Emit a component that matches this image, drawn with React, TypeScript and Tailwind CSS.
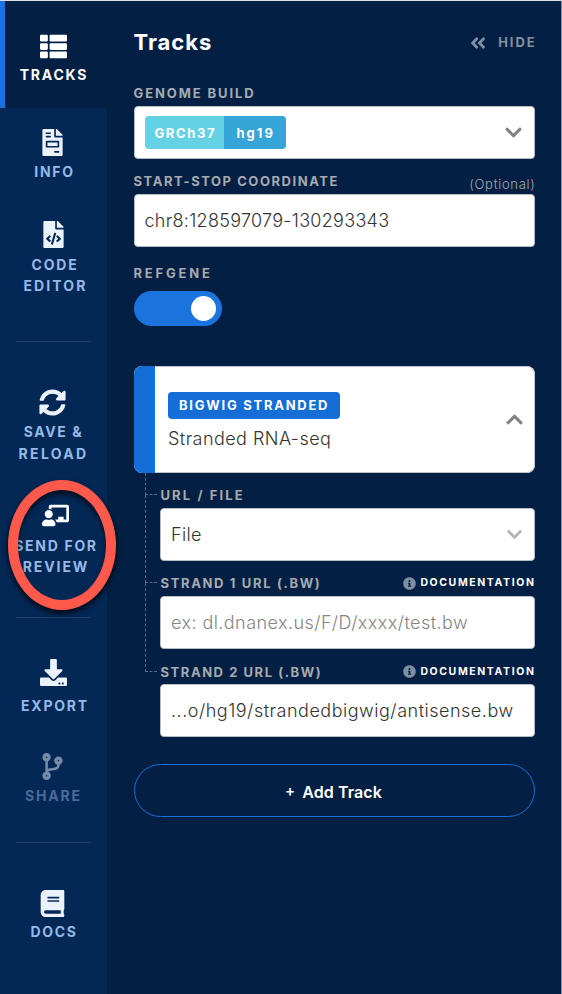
import type { ReactNode } from "react";
import {
  FaThList, FaFileInvoice, FaFileCode, FaSyncAlt, FaChalkboardTeacher, FaDownload,
  FaCodeBranch, FaBook, FaAngleDoubleLeft, FaChevronDown, FaChevronUp, FaInfoCircle,
} from "react-icons/fa";

function NavItem({ icon, children, className = "" }: { icon: ReactNode; children: ReactNode; className?: string }) {
  return (
    <button className={`flex w-full flex-col items-center text-[14px] font-bold leading-[21.5px] ${className}`}>
      <span className="flex h-[27px] items-center text-[27px]">{icon}</span>
      <span className="flex flex-col items-center whitespace-nowrap">{children}</span>
    </button>
  );
}

function Divider({ className }: { className: string }) {
  return <div className={`mx-4 h-px w-[75px] shrink-0 bg-[#1b3f67] ${className}`} />;
}

function Label({ children, className = "" }: { children: ReactNode; className?: string }) {
  return <span className={`whitespace-nowrap text-[13px] font-bold leading-4 text-[#a5abb0] ${className}`}>{children}</span>;
}

function DocLink() {
  return (
    <a className="flex h-4 items-center gap-[4px] text-[10.5px] font-bold text-white">
      <FaInfoCircle className="size-[13px] text-[#8090a3]" />
      <span className="-mr-px tracking-[1.6px]">DOCUMENTATION</span>
    </a>
  );
}

function Field({ children }: { children: ReactNode }) {
  return (
    <div className="flex h-[53px] items-center justify-between rounded-[4px] border border-[#b7bcc1] bg-white px-[10px] text-[18px] font-light text-[#333]">
      {children}
    </div>
  );
}

export default function App() {
  return (
    <div className="relative flex h-[994px] w-[562px] overflow-hidden border-r border-t border-r-[#8291a2] border-t-[#dce2e7] bg-[#032044] font-['Inter','Noto_Sans',sans-serif]">
      <nav className="flex w-[107px] shrink-0 flex-col bg-[#032856] text-[#96b9e8]">
        <div className="h-[107px] shrink-0 border-l-[5px] border-[#1a73dd] bg-[#032044] pt-[32px] text-white">
          <NavItem icon={<FaThList />} className="-ml-[3px] gap-[4px]"><span className="ml-[2px] tracking-[1.8px]">TRACKS</span></NavItem>
        </div>
        <NavItem icon={<FaFileInvoice className="-ml-[2px] text-[#ebf2fb]" />} className="mt-[21px] gap-[4.5px]"><span className="ml-[2px] tracking-[1.7px]">INFO</span></NavItem>
        <NavItem icon={<FaFileCode className="text-[#ebf2fb]" />} className="mt-[39px] gap-[5.5px]">
          <span className="ml-[3px] tracking-[1.8px]">CODE</span>
          <span className="ml-[4px] tracking-[2.1px]">EDITOR</span>
        </NavItem>
        <Divider className="mt-[44px]" />
        <NavItem icon={<FaSyncAlt className="-ml-[2px] text-[#ebf2fb]" />} className="mt-[47px] gap-[5.5px]">
          <span className="tracking-[1.6px]">SAVE &amp;</span>
          <span className="tracking-[2.3px]">RELOAD</span>
        </NavItem>
        <NavItem icon={<FaChalkboardTeacher className="ml-[3px] text-white" />} className="mt-[38px] gap-[5.5px]">
          <span className="ml-[5px] tracking-[1.7px]">SEND FOR</span>
          <span className="ml-[5px] tracking-[1.9px]">REVIEW</span>
        </NavItem>
        <Divider className="mt-[39px]" />
        <NavItem icon={<FaDownload className="text-[#ebf2fb]" />} className="mt-[41px] gap-[9px]"><span className="ml-[3px] tracking-[1.8px]">EXPORT</span></NavItem>
        <NavItem icon={<FaCodeBranch className="-ml-[2px] text-[#788ba7]" />} className="mt-[37px] gap-[4.5px] text-[#496b99]"><span className="tracking-[1.8px]">SHARE</span></NavItem>
        <Divider className="mt-[36px]" />
        <NavItem icon={<FaBook className="-ml-[2px] text-[#ebf2fb]" />} className="mt-[46.5px] gap-[4.5px]"><span className="ml-px tracking-[1.7px]">DOCS</span></NavItem>
      </nav>

      <main className="flex w-[427.5px] flex-col pl-[26.5px] text-white">
        <header className="flex h-[83px] items-center justify-between">
          <h1 className="text-[22px] font-bold tracking-[1px]">Tracks</h1>
          <button className="flex items-center gap-[11px] text-[13px] font-bold text-[#8191a4]">
            <FaAngleDoubleLeft className="size-[18px]" /><span className="-mr-[2px] tracking-[1.9px]">HIDE</span>
          </button>
        </header>
        <div className="flex h-[22px] pt-px"><Label className="tracking-[1.9px]">GENOME BUILD</Label></div>
        <Field>
          <div className="flex h-[33px] overflow-hidden rounded-[4px] text-[13px] font-bold leading-[35px] text-white">
            <span className="w-[79px] bg-[#65d1e5] pl-[10px] tracking-[1.6px]">GRCh37</span>
            <span className="w-[62.5px] bg-[#35a5d7] pl-[13px] tracking-[2px]">hg19</span>
          </div>
          <FaChevronDown className="mr-px size-[19px] text-[#808284]" />
        </Field>
        <div className="flex h-[35px] items-start justify-between pt-[14px]">
          <Label className="tracking-[1.55px]">START-STOP COORDINATE</Label>
          <span className="-mr-px mt-[3px] text-[13px] font-light leading-4 tracking-[0.7px] text-[#a5abb0]">(Optional)</span>
        </div>
        <Field><span className="tracking-[0.29px]">chr8:128597079-130293343</span></Field>
        <div className="flex h-[44px] pt-[18px]"><Label className="tracking-[2.8px]">REFGENE</Label></div>
        <button className="flex h-[35px] w-[88px] items-center justify-end rounded-full bg-[#1b74dd] pr-[6px]">
          <span className="size-[25px] rounded-full bg-white" />
        </button>

        <section className="mt-[40px] flex h-[107px] w-full shrink-0 overflow-hidden rounded-[8px] bg-white">
          <div className="w-[21px] bg-[#156dd7]" />
          <div className="flex grow items-center justify-between rounded-r-[8px] border-y border-r border-[#c0c4c8] pl-[13.5px] pr-[9.5px]">
            <div className="flex flex-col items-start pt-[5px]">
              <span className="flex h-[27px] w-[171.5px] items-center rounded-[4px] bg-[#156dd7] pl-[11px] text-[13px] font-bold">
                <span className="whitespace-nowrap tracking-[1.75px]">BIGWIG STRANDED</span>
              </span>
              <span className="mt-[6px] text-[18px] font-light leading-[27px] tracking-[0.45px] text-[#333]">Stranded RNA-seq</span>
            </div>
            <FaChevronUp className="size-[19px] text-[#808284]" />
          </div>
        </section>

        <div className="flex">
          <div className="ml-[11.5px] flex w-[15px] shrink-0 flex-col">
            <div className="h-[22px] w-[12px] border-b border-l border-dashed border-[#506b8c]" />
            <div className="h-[88px] w-[12px] border-b border-l border-dashed border-[#506b8c]" />
            <div className="h-[89px] w-[12px] border-b border-l border-dashed border-[#506b8c]" />
          </div>
          <div className="flex w-[374.5px] shrink-0 flex-col">
            <div className="flex h-[35px] pt-[14px]"><Label className="ml-[0.5px] tracking-[2.1px]">URL / FILE</Label></div>
            <Field><span className="tracking-[0.3px]">File</span><FaChevronDown className="mr-px size-[17px] text-[#b1b3b5]" /></Field>
            <div className="flex h-[35px] justify-between pt-[14px]"><Label className="ml-[0.5px] tracking-[1.65px]">STRAND 1 URL (.BW)</Label><DocLink /></div>
            <Field><span className="tracking-[0.43px] text-[#858585]">ex: dl.dnanex.us/F/D/xxxx/test.bw</span></Field>
            <div className="flex h-[35px] justify-between pt-[14.5px]"><Label className="ml-[0.5px] tracking-[1.55px]">STRAND 2 URL (.BW)</Label><DocLink /></div>
            <Field><span className="whitespace-nowrap tracking-[0.51px]">...o/hg19/strandedbigwig/antisense.bw</span></Field>
          </div>
        </div>
        <button className="mt-[27px] flex h-[53px] w-full shrink-0 items-center justify-center gap-[7px] rounded-full border border-[#176fd9] pr-px pt-[2px] text-[16px] font-semibold">
          <span className="text-[15px]">+</span><span className="tracking-[0.1px]">Add Track</span>
        </button>
      </main>
      <div className="absolute left-[8px] top-[479px] h-[130px] w-[108px] rounded-[50%] border-[10px] border-[#ff594b] shadow-[0_3px_5px_1px_rgba(0,0,0,0.7),inset_0_4px_5px_rgba(0,0,0,0.65)]" />
    </div>
  );
}
